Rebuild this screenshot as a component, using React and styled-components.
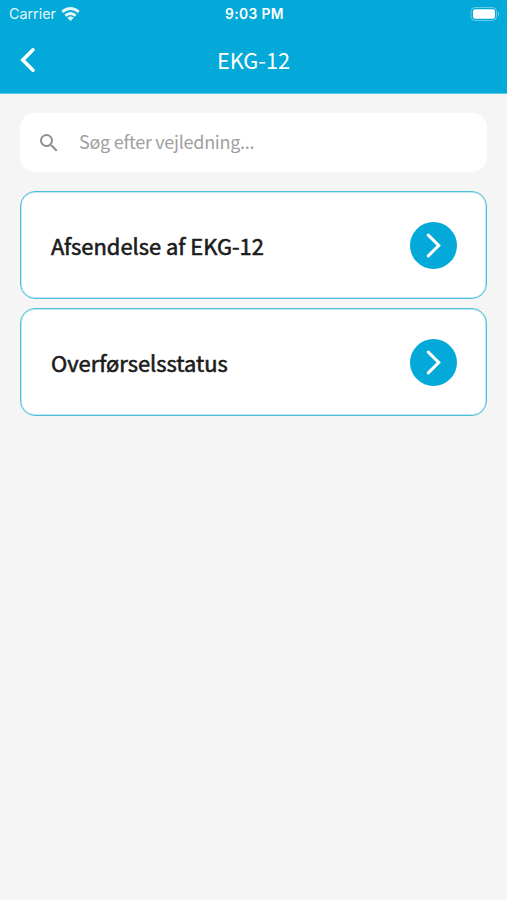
import React from 'react';
import styled, { createGlobalStyle } from 'styled-components';
import { MdSearch } from 'react-icons/md';

const GlobalStyle = createGlobalStyle`
    * {
        box-sizing: border-box;
    }
    body {
        margin: 0;
        background: #f5f5f5;
        font-family: 'Noto Sans CJK JP', 'Noto Sans', sans-serif;
    }
`;

const SCREEN = styled.div`
    width: 100%;
    min-height: 100vh;
    background: #f5f5f5;
`;

const HEADER = styled.header`
    height: 94px;
    background: #02a9d9;
    border-bottom: 1px solid #5cc7e4;
    color: #fff;
`;

const STATUS = styled.div`
    display: grid;
    grid-template-columns: 1fr auto 1fr;
    align-items: center;
    height: 28px;
    padding: 0 7px 0 9px;
    font-family: Inter, 'Liberation Sans', sans-serif;
    font-size: 13.8px;
    line-height: 28px;
`;

const CARRIER = styled.div`
    display: flex;
    align-items: center;
    gap: 5px;
    font-size: 14.3px;
    opacity: 0.9;
`;

const CLOCK = styled.div`
    font-weight: 600;
    letter-spacing: 0.4px;
`;

const BATTERY = styled.svg`
    justify-self: end;
`;

const NAV = styled.div`
    display: grid;
    grid-template-columns: 60px 1fr 60px;
    align-items: center;
    height: 64px;
`;

const BACK = styled.button`
    display: flex;
    width: 60px;
    padding: 0 0 0 20px;
    border: 0;
    background: none;
    color: inherit;
`;

const TITLE = styled.h1`
    margin: 0;
    font-size: 21.8px;
    font-weight: 400;
    line-height: 32px;
    text-align: center;
`;

const CONTENT = styled.main`
    padding: 19px 20px 0;
`;

const SEARCH = styled.label`
    display: flex;
    align-items: center;
    gap: 18px;
    height: 59px;
    margin-bottom: 19px;
    padding: 0 17px;
    border-radius: 15px;
    background: #fff;
    color: #8f8f8f;
`;

const INPUT = styled.input`
    flex: 1;
    min-width: 0;
    height: 40px;
    padding: 0 0 3px;
    border: 0;
    outline: 0;
    background: none;
    font-family: inherit;
    font-size: 18px;
    letter-spacing: -0.28px;

    &::placeholder {
        color: #a0a0a0;
        opacity: 1;
    }
`;

const LIST = styled.div`
    display: flex;
    flex-direction: column;
    gap: 9px;
`;

const CARD = styled.div`
    display: flex;
    justify-content: space-between;
    align-items: center;
    height: 108px;
    padding: 0 29px 0 30px;
    border: 1px solid #4dbdd9;
    border-radius: 15px;
    background: #fff;
    box-shadow: inset 0 0 0 1px rgba(77, 189, 217, 0.35);
`;

const LABEL = styled.span`
    padding-top: 2px;
    color: #1c1c1c;
    font-size: 21.9px;
    line-height: 32px;
    -webkit-text-stroke: 0.6px #1c1c1c;
`;

const ARROW = styled.div`
    display: flex;
    justify-content: center;
    align-items: center;
    width: 47px;
    height: 47px;
    border-radius: 50%;
    background: #02a9d9;
`;

const guides = ['Afsendelse af EKG-12', 'Overførselsstatus'];

function Guide({ name }) {
    return (
        <CARD>
            <LABEL>{name}</LABEL>
            <ARROW>
                <svg width="47" height="47" viewBox="0 0 47 47" fill="none" stroke="#fff" strokeWidth="3.1" strokeLinecap="round">
                    <path d="M18.3 13.2 L28.7 23.5 L18.3 33.8" />
                </svg>
            </ARROW>
        </CARD>
    );
}

export default function App() {
    return (
        <SCREEN>
            <GlobalStyle />
            <HEADER>
                <STATUS>
                    <CARRIER>
                        Carrier
                        <svg width="19" height="14" viewBox="0 0 19 14" fill="none" stroke="#fff" strokeWidth="2.9">
                            <path d="M1.2 5 Q9.5 -1.8 17.8 5" />
                            <path d="M4.3 8.6 Q9.5 4.2 14.7 8.6" />
                            <path d="M9.5 13.9 L6.3 10.8 Q9.5 8.2 12.7 10.8 Z" fill="#fff" stroke="none" />
                        </svg>
                    </CARRIER>
                    <CLOCK>9:03 PM</CLOCK>
                    <BATTERY width="30" height="14" viewBox="0 0 30 14" fill="none">
                        <rect x="1" y="0.5" width="25.5" height="13" rx="4" stroke="#fff" strokeOpacity="0.4" />
                        <rect x="3" y="2.3" width="22" height="9.4" rx="2.2" fill="#fff" />
                        <path d="M28 4.5 Q30 7 28 9.5 Z" fill="#fff" fillOpacity="0.45" />
                    </BATTERY>
                </STATUS>
                <NAV>
                    <BACK aria-label="Tilbage">
                        <svg width="16" height="26" viewBox="0 0 16 26" fill="none" stroke="#fff" strokeWidth="3.6" strokeLinecap="round">
                            <path d="M13 2.8 L2.8 13 L13 23.2" />
                        </svg>
                    </BACK>
                    <TITLE>EKG-12</TITLE>
                </NAV>
            </HEADER>
            <CONTENT>
                <SEARCH>
                    <MdSearch size={24} />
                    <INPUT placeholder="Søg efter vejledning..." />
                </SEARCH>
                <LIST>
                    {guides.map(name => (
                        <Guide key={name} name={name} />
                    ))}
                </LIST>
            </CONTENT>
        </SCREEN>
    );
}
